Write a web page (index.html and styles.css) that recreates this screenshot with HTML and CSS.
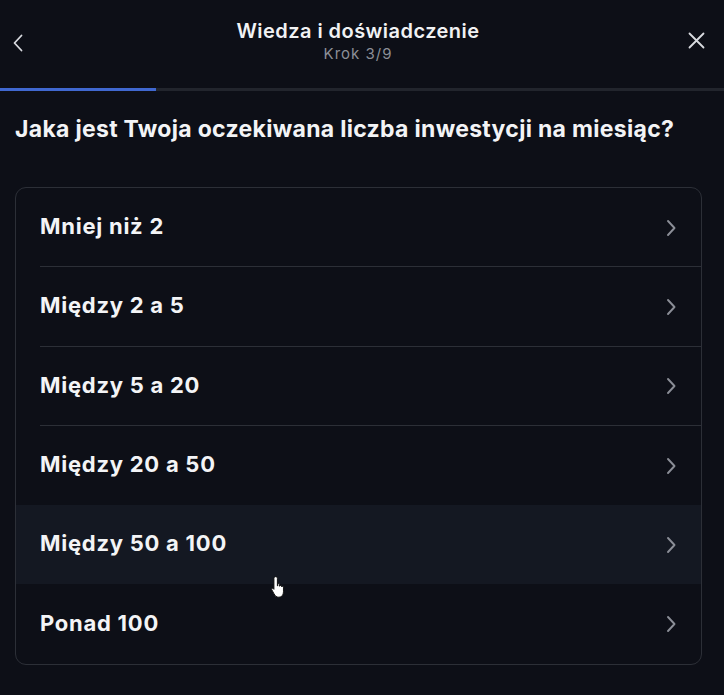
FILE: index.html
```html
<!DOCTYPE html>
<html lang="pl">
<head>
<meta charset="utf-8">
<link rel="stylesheet" href="styles.css">
</head>
<body>
<div class="screen">
  <header class="topbar">
    <button class="icon-btn back" aria-label="Wstecz">
      <svg width="14" height="18" viewBox="0 0 14 18"><path d="M10.5 1.5 L3.5 9 L10.5 16.5" fill="none" stroke="#d9dbe0" stroke-width="1.8" stroke-linecap="round" stroke-linejoin="round"/></svg>
    </button>
    <div class="titles">
      <div class="title">Wiedza i doświadczenie</div>
      <div class="subtitle">Krok 3/9</div>
    </div>
    <button class="icon-btn close" aria-label="Zamknij">
      <svg width="19" height="19" viewBox="0 0 19 19"><path d="M2.5 2.5 L16.5 16.5 M16.5 2.5 L2.5 16.5" fill="none" stroke="#d9dbe0" stroke-width="1.8" stroke-linecap="round"/></svg>
    </button>
  </header>
  <div class="progress"><div class="progress-fill" style="width:156px"></div></div>
  <h1 class="question">Jaka jest Twoja oczekiwana liczba inwestycji na miesiąc?</h1>
  <ul class="options">
    <li class="option"><span>Mniej niż 2</span><svg class="chev" width="12" height="18" viewBox="0 0 12 18"><path d="M3 2 L9.5 9 L3 16" fill="none" stroke="#8b8e97" stroke-width="1.9" stroke-linecap="round" stroke-linejoin="round"/></svg></li>
    <li class="option"><span>Między 2 a 5</span><svg class="chev" width="12" height="18" viewBox="0 0 12 18"><path d="M3 2 L9.5 9 L3 16" fill="none" stroke="#8b8e97" stroke-width="1.9" stroke-linecap="round" stroke-linejoin="round"/></svg></li>
    <li class="option"><span>Między 5 a 20</span><svg class="chev" width="12" height="18" viewBox="0 0 12 18"><path d="M3 2 L9.5 9 L3 16" fill="none" stroke="#8b8e97" stroke-width="1.9" stroke-linecap="round" stroke-linejoin="round"/></svg></li>
    <li class="option before-hover"><span>Między 20 a 50</span><svg class="chev" width="12" height="18" viewBox="0 0 12 18"><path d="M3 2 L9.5 9 L3 16" fill="none" stroke="#8b8e97" stroke-width="1.9" stroke-linecap="round" stroke-linejoin="round"/></svg></li>
    <li class="option hover"><span>Między 50 a 100</span><svg class="chev" width="12" height="18" viewBox="0 0 12 18"><path d="M3 2 L9.5 9 L3 16" fill="none" stroke="#8b8e97" stroke-width="1.9" stroke-linecap="round" stroke-linejoin="round"/></svg>
      <svg class="cursor" width="20" height="26" viewBox="0 0 18 24"><path d="M5 1.5 C6 1.5 6.6 2.2 6.6 3.2 L6.6 10 L7 10 L7 8.6 C7 7.7 8.6 7.7 8.6 8.6 L8.6 10.4 C8.8 9.4 10.4 9.4 10.4 10.4 L10.4 11 C10.7 10.2 12.2 10.2 12.2 11.2 L12.2 15.5 C12.2 18.5 10.6 20.5 8 20.5 C5.6 20.5 4.6 19.3 3.4 17.2 L1.4 13.6 C0.9 12.6 2 11.8 2.9 12.6 L3.4 13.2 L3.4 3.2 C3.4 2.2 4 1.5 5 1.5 Z" fill="#ffffff" stroke="#111" stroke-width="0.9"/></svg>
    </li>
    <li class="option last"><span>Ponad 100</span><svg class="chev" width="12" height="18" viewBox="0 0 12 18"><path d="M3 2 L9.5 9 L3 16" fill="none" stroke="#8b8e97" stroke-width="1.9" stroke-linecap="round" stroke-linejoin="round"/></svg></li>
  </ul>
</div>
</body>
</html>
```
FILE: styles.css
```css
* { box-sizing: border-box; }
html, body { margin: 0; padding: 0; background: #0d0f17; }
body {
  font-family: Inter, "Noto Sans", "DejaVu Sans", sans-serif;
  color: #f2f3f5;
  width: 724px;
  height: 695px;
  overflow: hidden;
}
.screen { display: flex; flex-direction: column; }
.topbar {
  height: 88px;
  display: flex;
  align-items: center;
  justify-content: space-between;
  padding: 0 18px 6px 11px;
}
.icon-btn {
  background: none;
  border: 0;
  padding: 0;
  display: flex;
  align-items: center;
  justify-content: center;
}
.icon-btn.back { margin-top: 3px; }
.icon-btn.close { margin-top: -1px; }
.titles { text-align: center; display: flex; flex-direction: column; align-items: center; margin-left: 4px; }
.title { font-size: 20px; font-weight: 600; line-height: 24px; color: #f1f2f4; letter-spacing: 0.45px; }
.subtitle { font-size: 15px; line-height: 20px; color: #8c8f98; margin-top: 1px; letter-spacing: 1px; }
.progress { height: 3px; background: #22252d; }
.progress-fill { height: 100%; background: #4068d0; }
.question {
  margin: 0 0 44px;
  padding: 24px 15px 0;
  font-size: 23px;
  font-weight: 700;
  line-height: 28px;
  letter-spacing: 0.3px;
  color: #f3f4f6;
}
.options {
  list-style: none;
  margin: 0 22px 0 15px;
  padding: 0;
  border: 1px solid #2c2f37;
  border-radius: 11px;
  overflow: hidden;
}
.option {
  position: relative;
  height: 79.3px;
  display: flex;
  align-items: center;
  justify-content: space-between;
  padding: 0 24px 3px 24px;
  font-size: 22px;
  font-weight: 700;
  letter-spacing: 0.75px;
  color: #f3f4f6;
}
.option::after {
  content: "";
  position: absolute;
  left: 24px;
  right: 0;
  bottom: 0;
  height: 1px;
  background: #2c2f37;
}
.option.before-hover::after, .option.hover::after, .option.last::after { display: none; }
.option.hover { background: #141822; }
.chev { flex: none; margin-top: 3px; }
.cursor { position: absolute; left: 254px; top: 70px; }
```
